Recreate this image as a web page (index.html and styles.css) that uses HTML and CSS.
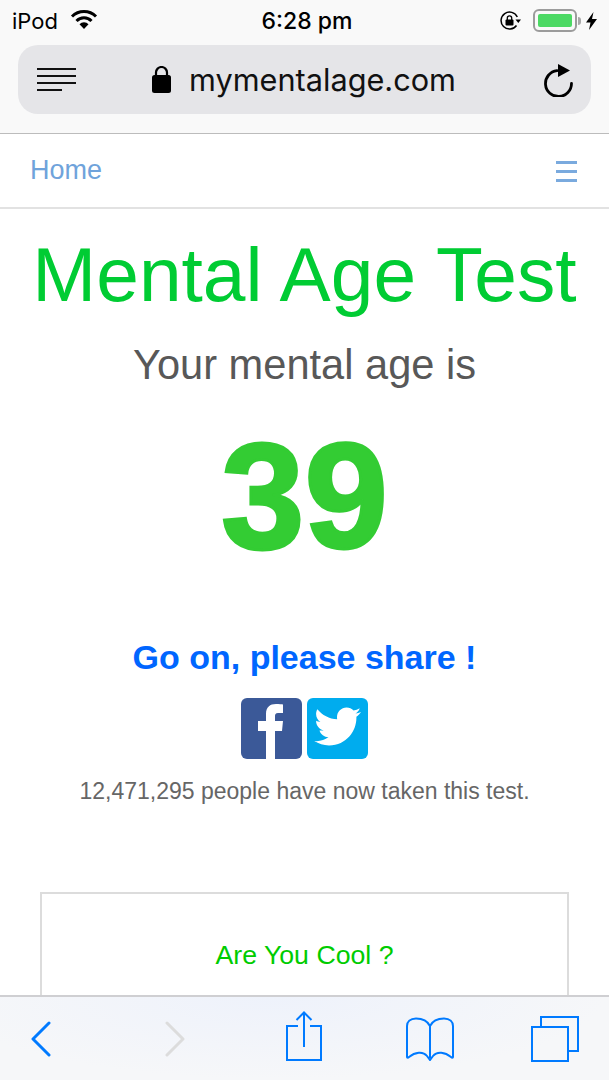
FILE: index.html
```html
<!DOCTYPE html>
<html lang="en">
<head>
  <meta charset="UTF-8"/>
  <title>Mental Age Test</title>
  <link rel="stylesheet" href="styles.css">
</head>
<body>
<div class="phone">
  <header class="chrome">
    <div class="status">
      <div class="status-left">
        <span>iPod</span>
        <svg class="wifi" width="28" height="20" viewBox="0 0 28 20">
          <path d="M2 7.500a17 17 0 0 1 24 0" fill="none" stroke="#000" stroke-width="3"/>
          <path d="M6.500 12a10.500 10.500 0 0 1 15 0" fill="none" stroke="#000" stroke-width="3"/>
          <path d="M9.500 15.200a6 6 0 0 1 9 0L14 20z" fill="#000"/>
        </svg>
      </div>
      <span class="clock">6:28 pm</span>
      <div class="status-right">
        <svg width="21" height="20" viewBox="0 0 21 20">
          <path d="M16.500 14.500A8.500 8.500 0 1 1 17.300 6" fill="none" stroke="#000" stroke-width="1.500"/>
          <path d="M15.500 8.500h5.500l-2.700 3.500z" fill="#000"/>
          <rect x="5.500" y="8.500" width="8" height="6" rx="1" fill="#000"/>
          <path d="M7.300 9V7a2.200 2.200 0 0 1 4.400 0v2" fill="none" stroke="#000" stroke-width="1.300"/>
        </svg>
        <div class="battery"><div class="battery-fill"></div></div>
        <div class="battery-tip"></div>
        <svg class="bolt" width="11" height="18" viewBox="0 0 11 18">
          <path d="M7.500 0 0 10.500h4.500L3 18l8-11H6z" fill="#000"/>
        </svg>
      </div>
    </div>
    <div class="urlbar">
      <div class="reader">
        <span></span><span></span><span></span><span class="short"></span>
      </div>
      <div class="address">
        <svg width="19" height="27" viewBox="0 0 19 27">
          <rect x="0" y="9" width="19" height="18" rx="2.500" fill="#000"/>
          <path d="M4 10V6.500a5.500 5.500 0 0 1 11 0V10" fill="none" stroke="#000" stroke-width="2.200"/>
        </svg>
        <span>mymentalage.com</span>
      </div>
      <svg class="reload" width="30" height="34" viewBox="0 0 30 34">
        <path d="M14 7.600A13 13 0 1 0 28.500 20.500" fill="none" stroke="#000" stroke-width="2.800" stroke-linecap="round"/>
        <path d="M15 1l12 6.500L15 14z" fill="#000"/>
      </svg>
    </div>
  </header>

  <nav class="nav">
    <a class="home">Home</a>
    <span class="menu"><span></span><span></span><span></span></span>
  </nav>

  <main class="content">
    <h1>Mental Age Test</h1>
    <p class="lead">Your mental age is</p>
    <p class="age">39</p>
    <p class="share">Go on, please share !</p>
    <div class="social">
      <div class="social-btn fb">
        <svg width="61" height="61" viewBox="0 0 61 61">
          <path d="M25 61V33H17V23H25V16C25 9 29 6 35 6 38 6 41 6.300 42 6.500V15H37C34.500 15 34 16.500 34 18V23H42L41 33H34V61z" fill="#fff"/>
        </svg>
      </div>
      <div class="social-btn tw">
        <svg width="61" height="61" viewBox="0 0 61 61">
          <path d="M54 14c-1.700.8-3.600 1.300-5.500 1.500 2-1.200 3.500-3 4.200-5.300-1.900 1.100-3.900 1.900-6.100 2.400-1.800-1.900-4.300-3.100-7-3.100-5.300 0-9.600 4.300-9.600 9.600 0 .8.100 1.500.2 2.200C22.200 20.900 15.100 17 10.400 11.200c-.8 1.400-1.300 3-1.300 4.800 0 3.300 1.700 6.300 4.300 8-1.600 0-3-.5-4.300-1.200v.1c0 4.700 3.300 8.500 7.700 9.400-.8.200-1.700.3-2.500.3-.6 0-1.200-.1-1.800-.2 1.200 3.800 4.800 6.600 9 6.700-3.300 2.600-7.400 4.100-11.900 4.100-.8 0-1.500 0-2.300-.1 4.300 2.700 9.300 4.300 14.700 4.300 17.700 0 27.400-14.700 27.400-27.400v-1.200c1.900-1.400 3.500-3.100 4.600-4.800z" fill="#fff"/>
        </svg>
      </div>
    </div>
    <p class="count">12,471,295 people have now taken this test.</p>
    <section class="card">
      <a class="card-link">Are You Cool ?</a>
    </section>
  </main>

  <footer class="toolbar">
    <svg width="22" height="36" viewBox="0 0 22 36">
      <path d="M19 2 3 18l16 16" fill="none" stroke="#007aff" stroke-width="3" stroke-linecap="round" stroke-linejoin="round"/>
    </svg>
    <svg width="22" height="36" viewBox="0 0 22 36">
      <path d="M3 2l16 16L3 34" fill="none" stroke="#dcdcdc" stroke-width="3" stroke-linecap="round" stroke-linejoin="round"/>
    </svg>
    <svg class="share-icon" width="36" height="50" viewBox="0 0 36 50">
      <path d="M12 15H1v34h34V15H24" fill="none" stroke="#007aff" stroke-width="2"/>
      <path d="M18 36V2M10.500 9 18 1.500 25.500 9" fill="none" stroke="#007aff" stroke-width="2"/>
    </svg>
    <svg width="48" height="44" viewBox="0 0 48 44">
      <path d="M24 41V9C21 3 15 1.500 10 1.500 4 1.500 1 5 1 9v31c0 1 1 1 2 0 6-5 14-6 18-1l3 4 3-4c4-5 12-4 18 1 1 1 2 1 2 0V9c0-4-3-7.500-9-7.500-5 0-11 1.500-14 7.500" fill="none" stroke="#007aff" stroke-width="2"/>
    </svg>
    <svg width="48" height="46" viewBox="0 0 48 46">
      <path d="M10 11V1h37v34H37" fill="none" stroke="#007aff" stroke-width="2"/>
      <rect x="1" y="11" width="36" height="34" fill="none" stroke="#007aff" stroke-width="2"/>
    </svg>
  </footer>
</div>
</body>
</html>
```
FILE: styles.css
```css
* {
    box-sizing: border-box;
}

body {
    margin: 0;
    font-family: "Liberation Sans", Arial, sans-serif;
    background: #ffffff;
    overflow: hidden;
}

p, h1 {
    margin: 0;
}

.phone {
    display: flex;
    flex-direction: column;
    height: 1080px;
    overflow: hidden;
}

/* browser chrome on top */
.chrome {
    height: 134px;
    flex: none;
    background: #f9f9f9;
    border-bottom: 1px solid #bcbcbc;
    padding: 0 18px;
}

.status {
    height: 45px;
    margin: 0 -6px;
    padding-bottom: 4px;
    display: flex;
    align-items: center;
    justify-content: space-between;
    font-family: "Inter", sans-serif;
    font-size: 22px;
    color: #000;
}

.status-left {
    display: flex;
    align-items: center;
    gap: 12px;
    width: 170px;
}

.wifi {
    margin-top: -3px;
}

.clock {
    font-weight: 500;
    font-size: 23px;
    margin-left: 5px;
}

.status-right {
    display: flex;
    align-items: center;
    justify-content: flex-end;
    width: 170px;
}

.battery {
    width: 44px;
    height: 23px;
    margin-left: 12px;
    padding: 3px;
    border: 2px solid #9c9c9c;
    border-radius: 6px;
}

.battery-fill {
    height: 100%;
    background: #4cd964;
    border-radius: 2px;
}

.battery-tip {
    width: 3px;
    height: 8px;
    margin-left: 1px;
    background: #a8a8a8;
    border-radius: 0 3px 3px 0;
}

.bolt {
    margin-left: 5px;
}

.urlbar {
    height: 69px;
    background: #e5e5e8;
    border-radius: 20px;
    display: flex;
    align-items: center;
    justify-content: space-between;
    padding: 0 18px 0 19px;
}

.reader {
    display: flex;
    flex-direction: column;
    gap: 5px;
    width: 39px;
}

.reader span {
    height: 2px;
    background: #111;
}

.reader .short {
    width: 25px;
}

.address {
    display: flex;
    align-items: center;
    gap: 18px;
    margin-right: 11px;
    font-family: "Inter", sans-serif;
    font-size: 30.7px;
    color: #111;
}

/* site nav */
.nav {
    height: 75px;
    flex: none;
    padding: 0 31px 0 30px;
    display: flex;
    align-items: center;
    justify-content: space-between;
    border-bottom: 2px solid #e2e2e2;
}

.home {
    font-size: 27px;
    color: #6fa3db;
}

.menu {
    display: flex;
    flex-direction: column;
    gap: 6px;
    width: 21px;
    margin-top: 1px;
    margin-right: 1px;
}

.menu span {
    height: 3px;
    background: #7aaade;
}

.content {
    flex: 1;
    min-height: 0;
    text-align: center;
    overflow: hidden;
}

h1 {
    margin-top: 21px;
    font-size: 76.7px;
    line-height: 90px;
    font-weight: 400;
    color: #00cc33;
}

.lead {
    margin-top: 20px;
    font-size: 41.6px;
    line-height: 50px;
    color: #585858;
}

.age {
    margin-top: 21px;
    font-size: 150px;
    line-height: 170px;
    font-weight: 700;
    color: #33cc33;
    -webkit-text-stroke: 3px #33cc33;
}

.share {
    margin-top: 55px;
    font-size: 34px;
    line-height: 42px;
    font-weight: 700;
    color: #0066ff;
}

.social {
    display: flex;
    justify-content: center;
    gap: 5px;
    margin-top: 20px;
}

.social-btn {
    width: 61px;
    height: 61px;
    border-radius: 6px;
    overflow: hidden;
}

.social-btn svg {
    display: block;
}

.fb {
    background: #3b5998;
}

.tw {
    background: #00acee;
}

.count {
    margin-top: 17px;
    font-size: 23px;
    line-height: 30px;
    color: #666;
}

.card {
    margin: 86px 40px 0 40px;
    height: 200px;
    border: 2px solid #dcdcdc;
    padding-top: 46px;
}

.card-link {
    font-size: 26.7px;
    line-height: 30px;
    color: #00cc00;
}

/* safari bottom bar */
.toolbar {
    height: 85px;
    flex: none;
    background: radial-gradient(ellipse at 45% 0%, #eef2fb 0%, #f6f7f9 70%);
    border-top: 2px solid #cfcfd2;
    display: grid;
    grid-template-columns: 82px 186px 72px 180px 70px;
    justify-items: center;
    align-items: center;
}

.share-icon {
    margin-top: -6px;
}
```
